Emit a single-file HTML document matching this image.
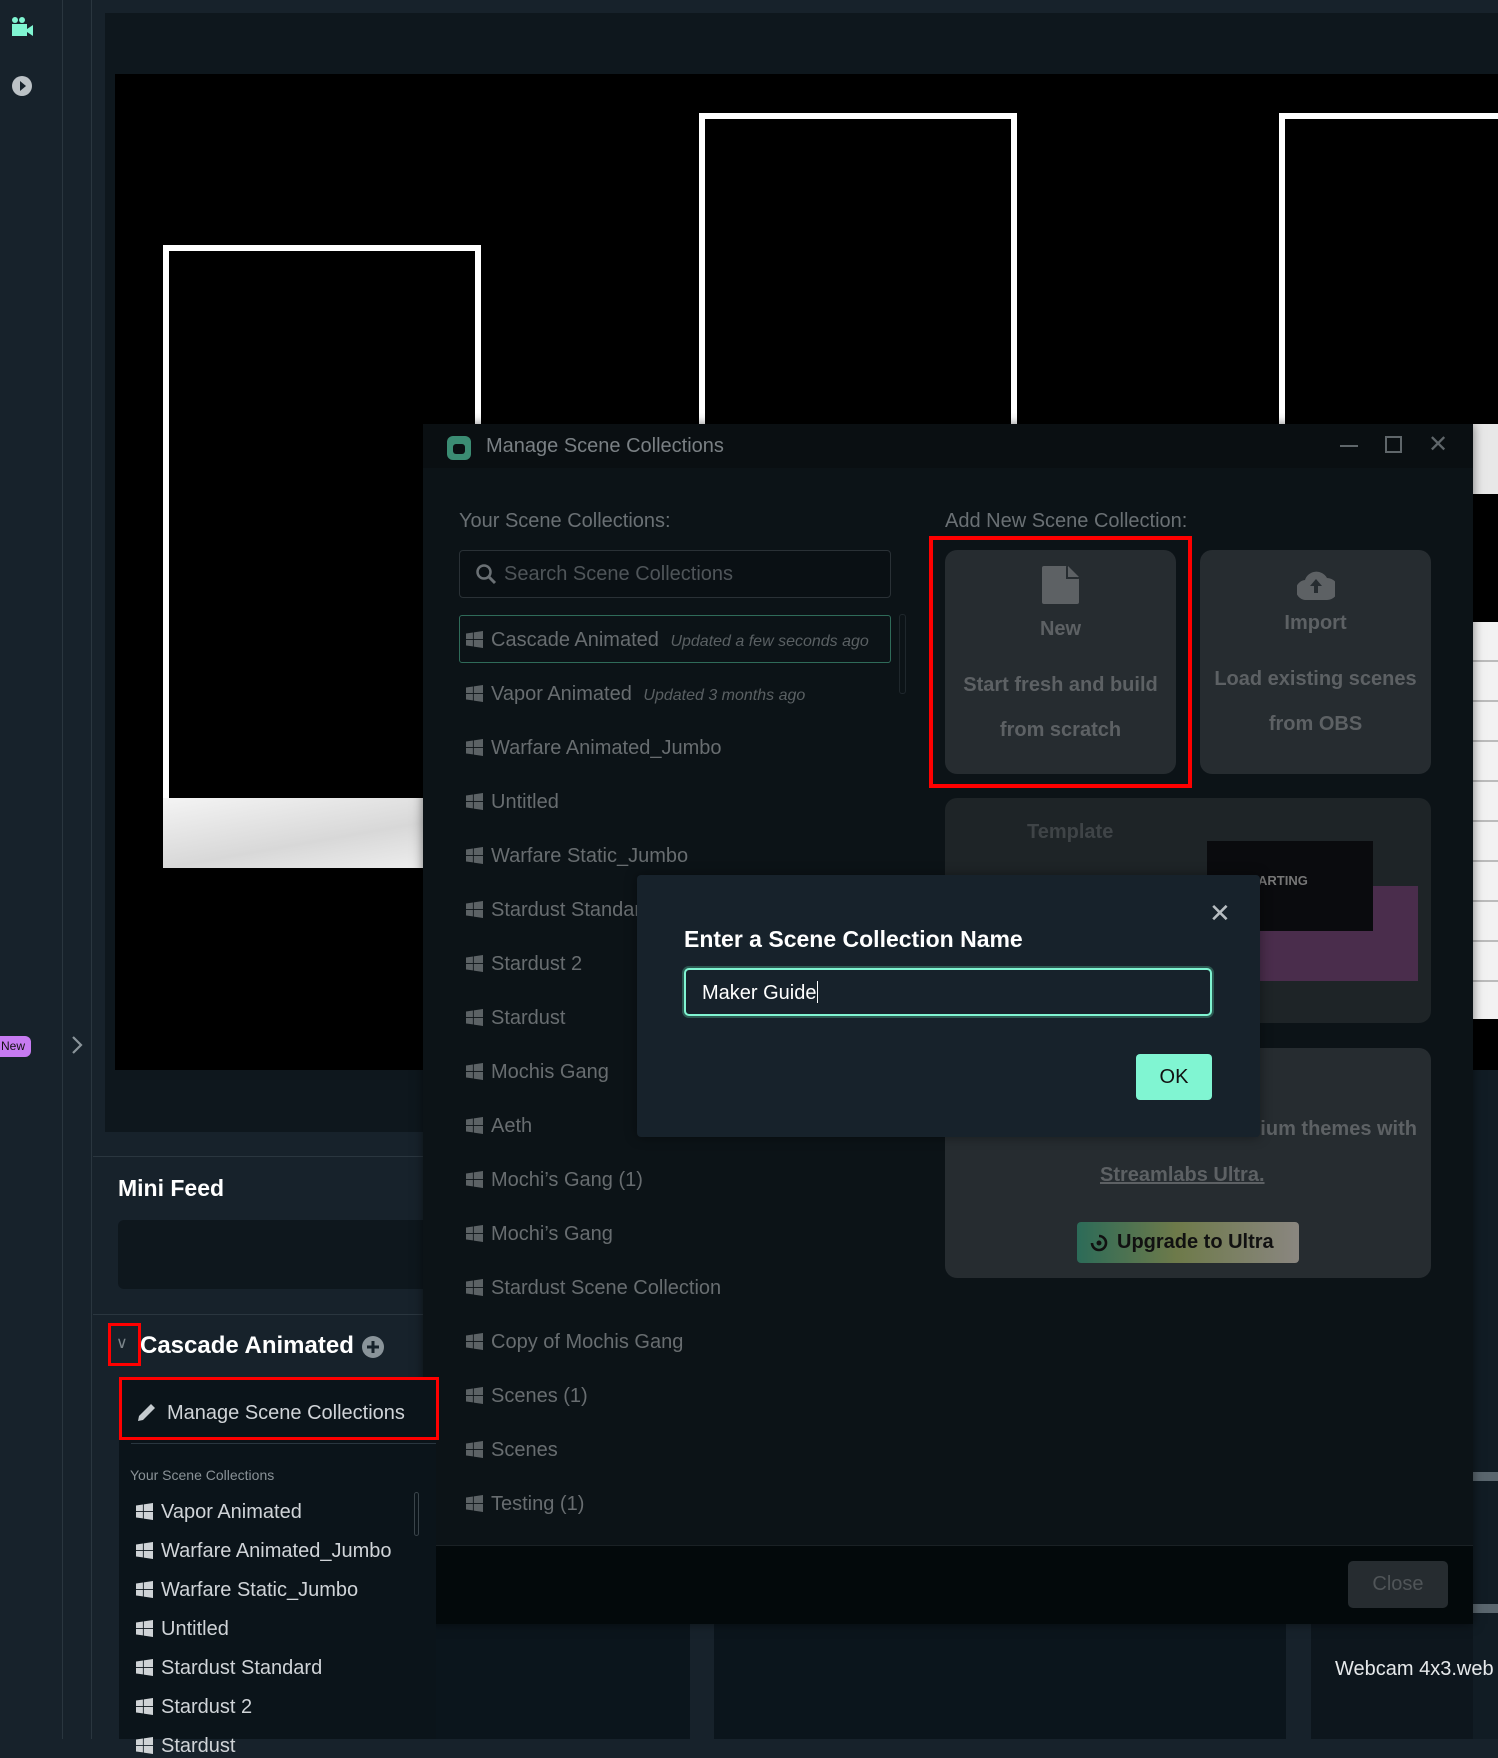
<!DOCTYPE html>
<html><head><meta charset="utf-8"><style>
*{margin:0;padding:0;box-sizing:border-box}
body{width:1498px;height:1739px;overflow:hidden;background:#17222b;font-family:"Liberation Sans",sans-serif;position:relative}
.a{position:absolute}
.win{display:inline-block;width:17px;height:17px;vertical-align:-2px;margin-right:8px}
.li{position:absolute;left:466px;font-size:20px;color:#686d70;white-space:nowrap}
.lli{position:absolute;left:136px;font-size:20px;color:#d0d4d8;white-space:nowrap}
.card{position:absolute;background:#262c30;border-radius:12px;color:#5d6164;text-align:center;font-weight:bold;font-size:20px}
</style></head><body>
<svg width="0" height="0" style="position:absolute"><defs><symbol id="w" viewBox="0 0 16 16"><path d="M0 2.3 6.5 1.4V7.5H0zM7.3 1.3 16 0V7.5H7.3zM0 8.3H6.5V14.5L0 13.6zM7.3 8.3H16V16L7.3 14.7z" fill="currentColor"/></symbol></defs></svg>

<!-- left sidebar -->
<div class="a" style="left:0;top:0;width:63px;height:1739px;background:#17222b;border-right:1px solid #2a363f"></div>
<div class="a" style="left:63px;top:0;width:29px;height:1739px;background:#17222b;border-right:1px solid #2a363f"></div>
<svg class="a" style="left:11px;top:16px" width="24" height="24" viewBox="0 0 24 24"><circle cx="4" cy="4" r="3" fill="#80f5d2"/><circle cx="11" cy="4" r="3" fill="#80f5d2"/><rect x="1" y="8" width="15" height="12" fill="#80f5d2"/><path d="M16 13l6-4v11l-6-4z" fill="#80f5d2"/></svg>
<svg class="a" style="left:11px;top:75px" width="22" height="22" viewBox="0 0 22 22"><circle cx="11" cy="11" r="10" fill="#bcc2c6"/><path d="M9 6l6 5-6 5z" fill="#17222b"/></svg>
<div class="a" style="left:0;top:1036px;width:31px;height:21px;background:#c77bf2;border-radius:0 6px 6px 0;font-size:12px;line-height:21px;color:#111;padding-left:1px">New</div>
<svg class="a" style="left:70px;top:1034px" width="14" height="22" viewBox="0 0 14 22"><path d="M3 3l8 8-8 8" stroke="#8a949a" stroke-width="2.2" fill="none"/></svg>

<!-- top bar + preview panel -->
<div class="a" style="left:93px;top:0;width:1405px;height:12px;background:#17222b"></div>
<div class="a" style="left:105px;top:13px;width:1393px;height:1119px;background:#0e171d"></div>
<div class="a" style="left:115px;top:74px;width:1383px;height:996px;background:#000"></div>
<div class="a" style="left:163px;top:245px;width:318px;height:560px;border:6px solid #fff;border-bottom:none"></div>
<div class="a" style="left:163px;top:798px;width:270px;height:70px;background:linear-gradient(170deg,#f4f4f4,#d8d8d8 60%,#eee)"></div>
<div class="a" style="left:699px;top:113px;width:318px;height:400px;border:6px solid #fff;border-bottom:none"></div>
<div class="a" style="left:1279px;top:113px;width:260px;height:400px;border:6px solid #fff;border-bottom:none"></div>
<div class="a" style="left:93px;top:1156px;width:1405px;height:1px;background:#2a363f"></div>
<div class="a" style="left:118px;top:1175px;font-size:23px;font-weight:bold;color:#fff">Mini Feed</div>
<div class="a" style="left:118px;top:1220px;width:330px;height:69px;background:#0e171d;border-radius:6px"></div>
<div class="a" style="left:93px;top:1314px;width:1405px;height:1px;background:#2a363f"></div>

<!-- right strip -->
<div class="a" style="left:1473px;top:424px;width:25px;height:70px;background:#e8e8e8"></div>
<div class="a" style="left:1473px;top:494px;width:25px;height:128px;background:#000"></div>
<div class="a" style="left:1473px;top:622px;width:25px;height:397px;background:repeating-linear-gradient(180deg,#f2f2f2 0 38px,#bbb 38px 40px)"></div>
<div class="a" style="left:1473px;top:1019px;width:25px;height:51px;background:#000"></div>
<div class="a" style="left:1473px;top:1070px;width:25px;height:669px;background:#111c24"></div>
<div class="a" style="left:1473px;top:1472px;width:25px;height:9px;background:#5a666e"></div>
<div class="a" style="left:1473px;top:1604px;width:25px;height:9px;background:#5a666e"></div>

<!-- bottom mid columns -->
<div class="a" style="left:436px;top:1624px;width:254px;height:115px;background:#0b151c"></div>
<div class="a" style="left:714px;top:1624px;width:572px;height:115px;background:#0b151c"></div>
<div class="a" style="left:1311px;top:1624px;width:162px;height:115px;background:#0d161d"></div>
<div class="a" style="left:1335px;top:1658px;font-size:20px;color:#e6e9eb;white-space:nowrap">Webcam 4x3.web</div>

<!-- dialog window -->
<div class="a" style="left:423px;top:424px;width:1050px;height:1200px;background:#0c1317;box-shadow:0 0 10px rgba(0,0,0,.5)"></div>
<div class="a" style="left:423px;top:424px;width:1050px;height:44px;background:#0a0f12"></div>
<div class="a" style="left:447px;top:436px;width:24px;height:24px;background:#3b8c73;border-radius:6px"></div>
<div class="a" style="left:453px;top:444px;width:12px;height:10px;background:#0a0f12;border-radius:3px"></div>
<div class="a" style="left:486px;top:435px;font-size:20px;color:#7a8084">Manage Scene Collections</div>
<div class="a" style="left:1340px;top:445px;width:18px;height:2px;background:#5f666a"></div>
<div class="a" style="left:1385px;top:436px;width:17px;height:17px;border:2px solid #5f666a"></div>
<div class="a" style="left:1428px;top:430px;font-size:24px;color:#5f666a">✕</div>

<div class="a" style="left:459px;top:510px;font-size:20px;color:#6a7074">Your Scene Collections:</div>
<div class="a" style="left:459px;top:550px;width:432px;height:48px;border:1px solid #2a3136;border-radius:4px;background:#0a1014"></div>
<svg class="a" style="left:475px;top:563px" width="22" height="22" viewBox="0 0 22 22"><circle cx="9" cy="9" r="6.5" stroke="#6a7074" stroke-width="2.5" fill="none"/><path d="M14 14l6 6" stroke="#6a7074" stroke-width="3"/></svg>
<div class="a" style="left:504px;top:563px;font-size:20px;color:#4f5559">Search Scene Collections</div>
<div class="a" style="left:459px;top:615px;width:432px;height:48px;border:1px solid #2f6b59;border-radius:3px"></div>
<div class="a" style="left:899px;top:614px;width:7px;height:80px;border:1px solid #1f272c;border-radius:3px"></div>
<div class="li" style="top:629px"><svg class="win" style="color:#5c6265"><use href="#w"/></svg>Cascade Animated <i style="font-size:16px;color:#5a6063;margin-left:6px">Updated a few seconds ago</i></div>
<div class="li" style="top:683px"><svg class="win" style="color:#5c6265"><use href="#w"/></svg>Vapor Animated <i style="font-size:16px;color:#5a6063;margin-left:6px">Updated 3 months ago</i></div>
<div class="li" style="top:737px"><svg class="win" style="color:#5c6265"><use href="#w"/></svg>Warfare Animated_Jumbo</div>
<div class="li" style="top:791px"><svg class="win" style="color:#5c6265"><use href="#w"/></svg>Untitled</div>
<div class="li" style="top:845px"><svg class="win" style="color:#5c6265"><use href="#w"/></svg>Warfare Static_Jumbo</div>
<div class="li" style="top:899px"><svg class="win" style="color:#5c6265"><use href="#w"/></svg>Stardust Standard</div>
<div class="li" style="top:953px"><svg class="win" style="color:#5c6265"><use href="#w"/></svg>Stardust 2</div>
<div class="li" style="top:1007px"><svg class="win" style="color:#5c6265"><use href="#w"/></svg>Stardust</div>
<div class="li" style="top:1061px"><svg class="win" style="color:#5c6265"><use href="#w"/></svg>Mochis Gang</div>
<div class="li" style="top:1115px"><svg class="win" style="color:#5c6265"><use href="#w"/></svg>Aeth</div>
<div class="li" style="top:1169px"><svg class="win" style="color:#5c6265"><use href="#w"/></svg>Mochi’s Gang (1)</div>
<div class="li" style="top:1223px"><svg class="win" style="color:#5c6265"><use href="#w"/></svg>Mochi’s Gang</div>
<div class="li" style="top:1277px"><svg class="win" style="color:#5c6265"><use href="#w"/></svg>Stardust Scene Collection</div>
<div class="li" style="top:1331px"><svg class="win" style="color:#5c6265"><use href="#w"/></svg>Copy of Mochis Gang</div>
<div class="li" style="top:1385px"><svg class="win" style="color:#5c6265"><use href="#w"/></svg>Scenes (1)</div>
<div class="li" style="top:1439px"><svg class="win" style="color:#5c6265"><use href="#w"/></svg>Scenes</div>
<div class="li" style="top:1493px"><svg class="win" style="color:#5c6265"><use href="#w"/></svg>Testing (1)</div>

<div class="a" style="left:945px;top:510px;font-size:20px;color:#6a7074">Add New Scene Collection:</div>
<div class="card" style="left:945px;top:550px;width:231px;height:224px">
<svg style="margin-top:16px" width="37" height="38" viewBox="0 0 37 38"><path d="M2 0h22l13 13v23a2 2 0 0 1-2 2H2a2 2 0 0 1-2-2V2a2 2 0 0 1 2-2z" fill="#5d6164"/><path d="M24 0v13h13" fill="#262c30"/><path d="M26 0l11 11H26z" fill="#5d6164"/></svg>
<div style="margin-top:8px">New</div><div style="margin-top:22px;line-height:45px">Start fresh and build<br>from scratch</div></div>
<div class="card" style="left:1200px;top:550px;width:231px;height:224px">
<svg style="margin-top:18px" width="38" height="32" viewBox="0 0 38 32"><path d="M10 32A10 10 0 0 1 8 12 12 12 0 0 1 30 10a11 11 0 0 1 0 22z" fill="#5d6164"/><path d="M19 11l-6 7h4v7h4v-7h4z" fill="#262c30"/></svg>
<div style="margin-top:6px">Import</div><div style="margin-top:22px;line-height:45px">Load existing scenes<br>from OBS</div></div>
<div class="a" style="left:929px;top:536px;width:263px;height:252px;border:4px solid #f00"></div>

<div class="card" style="left:945px;top:798px;width:486px;height:225px;background:#1e2427;color:#3f4447"><div style="position:absolute;left:82px;top:23px">Template</div></div>
<div class="a" style="left:1260px;top:886px;width:158px;height:95px;background:#4a2d4c"></div>
<div class="a" style="left:1207px;top:841px;width:166px;height:90px;background:#0a0b0e"></div>
<div class="a" style="left:1258px;top:873px;font-size:13px;font-weight:bold;color:#777">ARTING</div>

<div class="card" style="left:945px;top:1048px;width:486px;height:230px;font-weight:normal">
<div style="position:absolute;right:14px;top:70px;font-weight:bold;color:#5d6164">ium themes with</div>
<div style="position:absolute;left:155px;top:116px;font-weight:bold;text-decoration:underline;color:#5d6164">Streamlabs Ultra.</div>
<div style="position:absolute;left:132px;top:174px;width:222px;height:41px;border-radius:4px;background:linear-gradient(90deg,#2c6b58,#6e7a4a 45%,#8a8680);color:#111;font-weight:bold;line-height:41px;text-align:left;padding-left:40px">Upgrade to Ultra</div>
<svg style="position:absolute;left:145px;top:186px" width="18" height="18" viewBox="0 0 18 18"><path d="M9 2a7 7 0 1 1-7 7" stroke="#111" stroke-width="2.6" fill="none"/><circle cx="9" cy="9" r="2.5" fill="#111"/></svg>
</div>

<div class="a" style="left:423px;top:1545px;width:1050px;height:79px;background:#03090b;border-top:1px solid #1a2125"></div>
<div class="a" style="left:1348px;top:1561px;width:100px;height:47px;background:#262c30;border-radius:5px;color:#505558;font-size:20px;line-height:47px;text-align:center">Close</div>

<!-- inner modal -->
<div class="a" style="left:637px;top:875px;width:623px;height:262px;background:#17222b;border-radius:4px;box-shadow:0 0 12px rgba(0,0,0,.4)"></div>
<div class="a" style="left:1209px;top:898px;font-size:26px;color:#b7bdc1">✕</div>
<div class="a" style="left:684px;top:926px;font-size:23px;font-weight:bold;color:#fff">Enter a Scene Collection Name</div>
<div class="a" style="left:684px;top:968px;width:528px;height:48px;border:2px solid #80f5d2;border-radius:5px;box-shadow:0 0 0 2px #2c5a52;background:#17222b"></div>
<div class="a" style="left:702px;top:981px;font-size:20px;color:#fff">Maker Guide<span style="display:inline-block;width:1px;height:22px;background:#fff;vertical-align:-4px"></span></div>
<div class="a" style="left:1136px;top:1054px;width:76px;height:46px;background:#80f5d2;border-radius:4px;font-size:20px;line-height:46px;text-align:center;color:#111">OK</div>

<!-- bottom left scene dropdown (above dialog) -->
<div class="a" style="left:108px;top:1323px;width:33px;height:43px;border:3px solid #f00"></div>
<div class="a" style="left:116px;top:1333px;font-size:16px;color:#7b858b">∨</div>
<div class="a" style="left:140px;top:1332px;font-size:24px;font-weight:bold;color:#fff">Cascade Animated</div>
<svg class="a" style="left:361px;top:1335px" width="24" height="24" viewBox="0 0 24 24"><circle cx="12" cy="12" r="11" fill="#8a949a"/><path d="M12 6v12M6 12h12" stroke="#17222b" stroke-width="3"/></svg>
<div class="a" style="left:119px;top:1377px;width:317px;height:362px;background:#0b141a"></div>
<div class="a" style="left:119px;top:1377px;width:320px;height:63px;border:3px solid #f00"></div>
<svg class="a" style="left:136px;top:1401px" width="22" height="22" viewBox="0 0 22 22"><path d="M2 20l1-5L15 3l4 4L7 19z" fill="#c5cbcf"/></svg>
<div class="a" style="left:167px;top:1402px;font-size:20px;color:#d0d4d8">Manage Scene Collections</div>
<div class="a" style="left:131px;top:1443px;width:305px;height:1px;background:#2a363f"></div>
<div class="a" style="left:130px;top:1467px;font-size:14px;color:#8a9297">Your Scene Collections</div>
<div class="a" style="left:414px;top:1492px;width:5px;height:44px;border:1px solid #3a444a;border-radius:3px"></div>
<div class="lli" style="top:1501px"><svg class="win" style="color:#cfd3d6"><use href="#w"/></svg>Vapor Animated</div>
<div class="lli" style="top:1540px"><svg class="win" style="color:#cfd3d6"><use href="#w"/></svg>Warfare Animated_Jumbo</div>
<div class="lli" style="top:1579px"><svg class="win" style="color:#cfd3d6"><use href="#w"/></svg>Warfare Static_Jumbo</div>
<div class="lli" style="top:1618px"><svg class="win" style="color:#cfd3d6"><use href="#w"/></svg>Untitled</div>
<div class="lli" style="top:1657px"><svg class="win" style="color:#cfd3d6"><use href="#w"/></svg>Stardust Standard</div>
<div class="lli" style="top:1696px"><svg class="win" style="color:#cfd3d6"><use href="#w"/></svg>Stardust 2</div>
<div class="lli" style="top:1735px"><svg class="win" style="color:#cfd3d6"><use href="#w"/></svg>Stardust</div>
</body></html>
